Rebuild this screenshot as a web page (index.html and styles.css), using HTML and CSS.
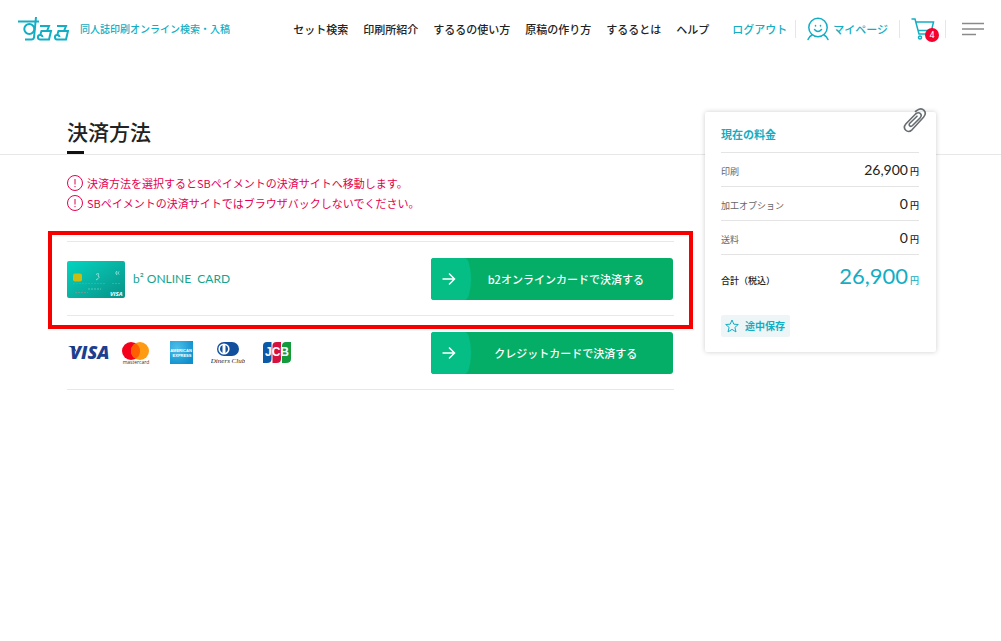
FILE: index.html
```html
<!DOCTYPE html>
<html lang="ja">
<head>
<meta charset="utf-8">
<meta name="viewport" content="width=device-width, initial-scale=1">
<title>決済方法 | するる</title>
<link rel="stylesheet" href="styles.css">
</head>
<body>
<header class="header">
  <a class="brand" href="#" aria-label="するる">
    <svg class="brand-logo" width="52" height="28" viewBox="0 0 52 28" fill="none" stroke="#12aec4" stroke-width="2">
      <path d="M1 6.500H22M19 2L17 22.500Q16.500 24.500 14.500 24.500H8"/>
      <path d="M17.300 14A5 5 0 1 1 7.300 14A5 5 0 1 1 17.300 14"/>
      <path d="M23 11H32L30 16H24.500L23.500 19M24.500 16H34L32 24.500H23A2.300 2.300 0 1 1 25.500 22"/>
      <path d="M40 11H49L47 16H41.500L40.500 19M41.500 16H51L49 24.500H40A2.300 2.300 0 1 1 42.500 22"/>
    </svg>
    <span class="brand-copy">同人誌印刷オンライン検索・入稿</span>
  </a>
  <nav class="nav">
    <a href="#">セット検索</a>
    <a href="#">印刷所紹介</a>
    <a href="#">するるの使い方</a>
    <a href="#">原稿の作り方</a>
    <a href="#">するるとは</a>
    <a href="#">ヘルプ</a>
  </nav>
  <div class="account">
    <a class="account-link logout" href="#">ログアウト</a>
    <a class="account-link mypage" href="#">
      <svg width="22" height="24" viewBox="0 0 22 24" fill="none" stroke="#12aec4" stroke-width="1.500" stroke-linecap="round">
        <circle cx="11" cy="10.500" r="9.200"/>
        <path d="M1 22.500Q2 19.500 5 18M21 22.500Q20 19.500 17 18M7.500 12.500Q11 16.500 14.500 12.500M8.500 8.500V9M13.500 8.500V9"/>
      </svg>
      <span>マイページ</span>
    </a>
    <a class="cart" href="#" aria-label="カート">
      <svg width="24" height="24" viewBox="0 0 24 24" fill="none" stroke="#12aec4" stroke-width="1.500">
        <path d="M.5 2H4L8 17H20M5 5H22.500L20.500 13.500H7"/>
        <circle cx="9" cy="20.500" r="1.500"/><circle cx="18" cy="20.500" r="1.500"/>
      </svg>
      <span class="cart-count">4</span>
    </a>
    <button class="menu" type="button" aria-label="メニュー">
      <svg width="22" height="14" viewBox="0 0 22 14" stroke="#8a8a8a" stroke-width="1.500">
        <path d="M0 1.500H22M0 7H22M0 12.500H14"/>
      </svg>
    </button>
  </div>
</header>

<main class="page">
  <div class="page-head"><h1 class="page-title">決済方法</h1></div>

  <section class="payment">
    <ul class="notices">
      <li class="notice">
        <svg width="16" height="16" viewBox="0 0 16 16" fill="none" stroke="#e5004f"><circle cx="8" cy="8" r="7.500"/><path d="M8 4V9.500M8 11V12.200"/></svg>
        <span>決済方法を選択するとSBペイメントの決済サイトへ移動します。</span>
      </li>
      <li class="notice">
        <svg width="16" height="16" viewBox="0 0 16 16" fill="none" stroke="#e5004f"><circle cx="8" cy="8" r="7.500"/><path d="M8 4V9.500M8 11V12.200"/></svg>
        <span>SBペイメントの決済サイトではブラウザバックしないでください。</span>
      </li>
    </ul>

    <div class="methods">
      <div class="method method-marked">
        <div class="b2">
          <svg width="58" height="37" viewBox="0 0 58 37">
            <defs>
              <linearGradient id="card" x1="0" y1="0" x2="1" y2="1">
                <stop offset="0" stop-color="#00d5c0"/><stop offset=".4" stop-color="#08b9a8"/><stop offset="1" stop-color="#079388"/>
              </linearGradient>
            </defs>
            <rect width="58" height="37" rx="2" fill="url(#card)"/>
            <rect x="6" y="12.500" width="9" height="8" rx="2" fill="#c9bd13"/>
            <path d="M29 13.500Q33 11 31 15Q34 16 29 19M50 10Q47.500 12 50 14M52 10.500Q49.500 12 52 13.500" fill="none" stroke="#8fe6dc"/>
            <path d="M6 22.500H39M45 22.500H54M8 31.500H21" stroke="#5d9f95" stroke-dasharray="2 1"/>
            <path d="M21 28H34" stroke="#53c9bd" stroke-dasharray="2 1"/>
            <text class="card-visa" x="43" y="35">VISA</text>
          </svg>
          <span class="b2-name">b² ONLINE&nbsp; CARD</span>
        </div>
        <button class="pay" type="button">
          <span class="pay-arrow"><svg width="14" height="12" viewBox="0 0 14 12" fill="none" stroke="#fff" stroke-width="1.500"><path d="M.5 6H12.500M7 .5L12.500 6L7 11.500"/></svg></span>
          <span class="pay-label">b2オンラインカードで決済する</span>
        </button>
      </div>

      <div class="method">
        <div class="brands">
          <svg width="44" height="24" viewBox="0 0 44 24" role="img" aria-label="VISA">
            <text class="visa" x="3" y="18">VISA</text>
            <path d="M1 5H7L10 12Q7 7 1 5" fill="#1d3478"/>
          </svg>
          <svg width="30" height="24" viewBox="0 0 30 24" role="img" aria-label="mastercard">
            <circle cx="10" cy="10" r="9" fill="#f5001b"/><circle cx="19" cy="10" r="9" fill="#ff9a13"/>
            <path d="M14.500 2.200A9 9 0 0 1 14.500 17.800A9 9 0 0 1 14.500 2.200" fill="#ff5f00"/>
            <text class="mc" x="15" y="23">mastercard</text>
          </svg>
          <svg width="24" height="24" viewBox="0 0 24 24" role="img" aria-label="AMERICAN EXPRESS">
            <defs><radialGradient id="amex" cx=".3" cy=".3" r=".8"><stop offset="0" stop-color="#4dc0ea"/><stop offset="1" stop-color="#0f8fcc"/></radialGradient></defs>
            <rect x="1" width="23" height="23" fill="url(#amex)"/>
            <text class="amex" x="12" y="11">AMERICAN</text>
            <text class="amex" x="13" y="16">EXPRESS</text>
          </svg>
          <svg width="34" height="24" viewBox="0 0 34 24" role="img" aria-label="Diners Club">
            <path d="M13 1H21A7 7 0 0 1 21 15H13Z" fill="#12509e"/>
            <circle cx="13" cy="8" r="7" fill="#12509e"/><circle cx="13" cy="8" r="5.600" fill="#fff"/>
            <path d="M11.500 4A4.400 4.400 0 0 0 11.500 12ZM14.500 4A4.400 4.400 0 0 1 14.500 12Z" fill="#12509e"/>
            <text class="diners" x="17" y="22">Diners Club</text>
          </svg>
          <svg width="28" height="24" viewBox="0 0 28 24" role="img" aria-label="JCB">
            <path d="M4 1H8.500V18Q8.500 22 4 22H0V5Q0 1 4 1" fill="#0a5aa8"/>
            <path d="M13.500 1H18V18Q18 22 13.500 22H9.500V5Q9.500 1 13.500 1" fill="#d5123f"/>
            <path d="M23 1H28V18Q28 22 23 22H19V5Q19 1 23 1" fill="#129a3d"/>
            <text class="jcb" x="14" y="15">JCB</text>
          </svg>
        </div>
        <button class="pay" type="button">
          <span class="pay-arrow"><svg width="14" height="12" viewBox="0 0 14 12" fill="none" stroke="#fff" stroke-width="1.500"><path d="M.5 6H12.500M7 .5L12.500 6L7 11.500"/></svg></span>
          <span class="pay-label">クレジットカードで決済する</span>
        </button>
      </div>
    </div>
  </section>

  <aside class="price">
    <svg class="clip" width="24" height="26" viewBox="0 0 24 26" fill="none" stroke="#666c70" stroke-width="1.600" stroke-linecap="round">
      <path d="M12.500 3.500L14 2.400C19.500-1.500 25 4 20.500 9.300L9 21.800C4.500 26-1 20.800 2.800 16L12.500 6C16.500 3 20 6.500 17 10L9.500 17.500C7.500 19.500 5 17.200 6.800 15.200L14 8.200"/>
    </svg>
    <h2 class="price-title">現在の料金</h2>
    <dl class="price-list">
      <div class="price-row"><dt>印刷</dt><dd><span class="num">26,900</span> 円</dd></div>
      <div class="price-row"><dt>加工オプション</dt><dd><span class="num">0</span> 円</dd></div>
      <div class="price-row"><dt>送料</dt><dd><span class="num">0</span> 円</dd></div>
      <div class="price-row price-total"><dt>合計（税込）</dt><dd><span class="num">26,900</span> 円</dd></div>
    </dl>
    <button class="save" type="button">
      <svg width="14" height="14" viewBox="0 0 14 14" fill="none" stroke="#12aec4"><path d="M7 1L8.800 5.200L13.300 5.500L9.900 8.400L11 12.900L7 10.400L3 12.900L4.100 8.400L.7 5.500L5.200 5.200Z"/></svg>
      <span>途中保存</span>
    </button>
  </aside>
</main>
</body>
</html>
```

FILE: styles.css
```css
* { box-sizing: border-box; }

body {
  margin: 0;
  background: #fff;
  color: #222;
  font: 500 11px/16px "Noto Sans CJK JP", sans-serif;
}

a { color: inherit; text-decoration: none; }
button { margin: 0; padding: 0; border: 0; background: none; color: inherit; font: inherit; cursor: pointer; }
svg { display: block; flex: none; }
h1, h2, ul, dl, dd { margin: 0; padding: 0; }

.header {
  display: flex;
  align-items: center;
  height: 58px;
  padding: 0 17px;
  white-space: nowrap;
}

.brand { display: flex; align-items: center; gap: 11px; color: #12aec4; }
.brand-copy { font-size: 10px; }

.nav { display: flex; gap: 15px; margin-left: auto; }

.account { display: flex; align-items: center; margin-left: 23px; color: #12aec4; }
.mypage, .cart, .menu { display: flex; align-items: center; height: 18px; border-left: 1px solid #e6e6e6; }
.logout { padding-right: 8px; }
.mypage { gap: 4px; padding: 0 11px; }
.cart { position: relative; padding: 0 10px 0 11px; }
.cart-count {
  position: absolute;
  right: 6px;
  bottom: -4px;
  width: 14px;
  border-radius: 7px;
  background: #f5002d;
  color: #fff;
  font: 9px/14px Roboto, sans-serif;
  text-align: center;
}
.menu { padding-left: 16px; }

.page {
  display: grid;
  grid-template-columns: minmax(67px, 1fr) minmax(0, 607px) 31px 231px minmax(65px, 1fr);
  grid-template-rows: auto 1fr;
}

.page-head {
  display: grid;
  grid-template-columns: subgrid;
  grid-column: 1 / -1;
  grid-row: 1;
  padding-top: 56px;
  border-bottom: 1px solid #e8e8e8;
}
.page-title {
  grid-column: 2;
  padding-bottom: 4px;
  font-size: 21px;
  font-weight: 500;
  line-height: 34px;
}
.page-title::after {
  content: "";
  display: block;
  width: 17px;
  height: 3px;
  margin: 3px 0 -4px;
  background: #111;
}

.payment { grid-column: 2; grid-row: 2; padding-top: 18px; }

.notices { display: grid; list-style: none; color: #e5004f; font-weight: 400; }
.notice { display: flex; align-items: center; gap: 4px; min-height: 20px; }

.methods { margin-top: 28px; border-top: 1px solid #e8e8e8; }
.method {
  display: flex;
  align-items: center;
  justify-content: space-between;
  padding: 16px 1px 15px 0;
  border-bottom: 1px solid #e8e8e8;
}
.method-marked { position: relative; }
.method-marked::after {
  content: "";
  position: absolute;
  inset: -11px -19px -14px;
  border: 4px solid #f60000;
  pointer-events: none;
}

.b2 { display: flex; align-items: center; gap: 8px; color: #12a58f; }
.b2-name { font: 12px/16px Lato, sans-serif; }
.brands { display: flex; align-items: center; gap: 18px; }
.brands svg:first-child { margin-right: -8px; }

.card-visa { fill: #fff; font: italic 700 6px "Open Sans", sans-serif; }
.visa { fill: #1d3f8f; font: italic 800 18px "Open Sans", sans-serif; }
.mc { fill: #333; font: 5px "Open Sans", sans-serif; text-anchor: middle; }
.amex { fill: #fff; font: 700 4px "Liberation Sans", sans-serif; text-anchor: middle; }
.diners { fill: #222; font: italic 7px "Liberation Serif", serif; text-anchor: middle; }
.jcb { fill: #fff; font: 700 12px "Liberation Sans", sans-serif; text-anchor: middle; }

.pay {
  display: flex;
  width: 40%;
  height: 42px;
  overflow: hidden;
  border-radius: 3px;
  background: #05ae67;
  color: #fff;
}
.pay-arrow {
  display: flex;
  flex: none;
  align-items: center;
  width: 40px;
  height: 100%;
  padding-left: 11px;
  border-radius: 0 6px 6px 0 / 0 21px 21px 0;
  background: #04be85;
}
.pay-label { flex: 1; align-self: center; padding-right: 12px; }

.price {
  position: relative;
  grid-column: 4;
  grid-row: 1 / 3;
  align-self: start;
  margin-top: 54px;
  padding: 14px 17px 15px 16px;
  border-radius: 2px;
  background: #fff;
  box-shadow: 0 0 5px rgba(0, 0, 0, .2);
}
.clip { position: absolute; top: -4px; right: 9px; }
.price-title { padding-bottom: 10px; color: #12aec4; font-size: 11px; font-weight: 700; line-height: 16px; }
.price-row {
  display: flex;
  align-items: baseline;
  justify-content: space-between;
  height: 34px;
  padding-top: 7px;
  border-top: 1px solid #e4e4e4;
  font-size: 9px;
}
.price-row dt { color: #666; font-weight: 400; }
.num { font: 14px/20px Lato, sans-serif; }
.price-total { height: 61px; }
.price-total dt { color: #222; font-weight: 500; }
.price-total dd { color: #12aec4; }
.price-total .num { font-size: 22px; line-height: 28px; }

.save {
  display: flex;
  align-items: center;
  gap: 6px;
  height: 22px;
  padding: 0 5px 0 4px;
  border-radius: 2px;
  background: #eef5f7;
  color: #12aec4;
  font-size: 10px;
  font-weight: 700;
}
```
